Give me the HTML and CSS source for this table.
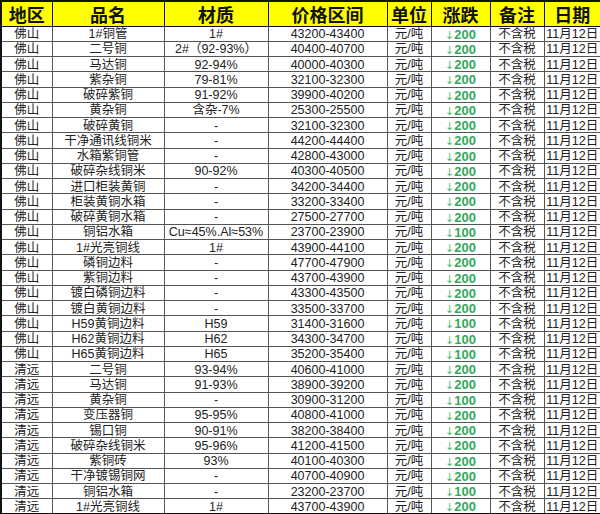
FILE: index.html
```html
<!DOCTYPE html>
<html lang="zh">
<head>
<meta charset="utf-8">
<link rel="stylesheet" href="styles.css">
</head>
<body>
<table class="price">
<colgroup>
<col class="c1"><col class="c2"><col class="c3"><col class="c4"><col class="c5"><col class="c6"><col class="c7"><col class="c8">
</colgroup>
<thead>
<tr><th>地区</th><th>品名</th><th>材质</th><th>价格区间</th><th>单位</th><th>涨跌</th><th>备注</th><th>日期</th></tr>
</thead>
<tbody>
<tr><td>佛山</td><td>1#铜管</td><td>1#</td><td>43200-43400</td><td>元/吨</td><td class="chg"><span class="ar">↓</span>200</td><td>不含税</td><td>11月12日</td></tr>
<tr><td>佛山</td><td>二号铜</td><td>2#（92-93%）</td><td>40400-40700</td><td>元/吨</td><td class="chg"><span class="ar">↓</span>200</td><td>不含税</td><td>11月12日</td></tr>
<tr><td>佛山</td><td>马达铜</td><td>92-94%</td><td>40000-40300</td><td>元/吨</td><td class="chg"><span class="ar">↓</span>200</td><td>不含税</td><td>11月12日</td></tr>
<tr><td>佛山</td><td>紫杂铜</td><td>79-81%</td><td>32100-32300</td><td>元/吨</td><td class="chg"><span class="ar">↓</span>200</td><td>不含税</td><td>11月12日</td></tr>
<tr><td>佛山</td><td>破碎紫铜</td><td>91-92%</td><td>39900-40200</td><td>元/吨</td><td class="chg"><span class="ar">↓</span>200</td><td>不含税</td><td>11月12日</td></tr>
<tr><td>佛山</td><td>黄杂铜</td><td>含杂-7%</td><td>25300-25500</td><td>元/吨</td><td class="chg"><span class="ar">↓</span>200</td><td>不含税</td><td>11月12日</td></tr>
<tr><td>佛山</td><td>破碎黄铜</td><td>-</td><td>32100-32300</td><td>元/吨</td><td class="chg"><span class="ar">↓</span>200</td><td>不含税</td><td>11月12日</td></tr>
<tr><td>佛山</td><td>干净通讯线铜米</td><td>-</td><td>44200-44400</td><td>元/吨</td><td class="chg"><span class="ar">↓</span>200</td><td>不含税</td><td>11月12日</td></tr>
<tr><td>佛山</td><td>水箱紫铜管</td><td>-</td><td>42800-43000</td><td>元/吨</td><td class="chg"><span class="ar">↓</span>200</td><td>不含税</td><td>11月12日</td></tr>
<tr><td>佛山</td><td>破碎杂线铜米</td><td>90-92%</td><td>40300-40500</td><td>元/吨</td><td class="chg"><span class="ar">↓</span>200</td><td>不含税</td><td>11月12日</td></tr>
<tr><td>佛山</td><td>进口柜装黄铜</td><td>-</td><td>34200-34400</td><td>元/吨</td><td class="chg"><span class="ar">↓</span>200</td><td>不含税</td><td>11月12日</td></tr>
<tr><td>佛山</td><td>柜装黄铜水箱</td><td>-</td><td>33200-33400</td><td>元/吨</td><td class="chg"><span class="ar">↓</span>200</td><td>不含税</td><td>11月12日</td></tr>
<tr><td>佛山</td><td>破碎黄铜水箱</td><td>-</td><td>27500-27700</td><td>元/吨</td><td class="chg"><span class="ar">↓</span>200</td><td>不含税</td><td>11月12日</td></tr>
<tr><td>佛山</td><td>铜铝水箱</td><td>Cu≈45%.Al≈53%</td><td>23700-23900</td><td>元/吨</td><td class="chg"><span class="ar">↓</span>100</td><td>不含税</td><td>11月12日</td></tr>
<tr><td>佛山</td><td>1#光亮铜线</td><td>1#</td><td>43900-44100</td><td>元/吨</td><td class="chg"><span class="ar">↓</span>200</td><td>不含税</td><td>11月12日</td></tr>
<tr><td>佛山</td><td>磷铜边料</td><td>-</td><td>47700-47900</td><td>元/吨</td><td class="chg"><span class="ar">↓</span>200</td><td>不含税</td><td>11月12日</td></tr>
<tr><td>佛山</td><td>紫铜边料</td><td>-</td><td>43700-43900</td><td>元/吨</td><td class="chg"><span class="ar">↓</span>200</td><td>不含税</td><td>11月12日</td></tr>
<tr><td>佛山</td><td>镀白磷铜边料</td><td>-</td><td>43300-43500</td><td>元/吨</td><td class="chg"><span class="ar">↓</span>200</td><td>不含税</td><td>11月12日</td></tr>
<tr><td>佛山</td><td>镀白黄铜边料</td><td>-</td><td>33500-33700</td><td>元/吨</td><td class="chg"><span class="ar">↓</span>200</td><td>不含税</td><td>11月12日</td></tr>
<tr><td>佛山</td><td>H59黄铜边料</td><td>H59</td><td>31400-31600</td><td>元/吨</td><td class="chg"><span class="ar">↓</span>100</td><td>不含税</td><td>11月12日</td></tr>
<tr><td>佛山</td><td>H62黄铜边料</td><td>H62</td><td>34300-34700</td><td>元/吨</td><td class="chg"><span class="ar">↓</span>100</td><td>不含税</td><td>11月12日</td></tr>
<tr><td>佛山</td><td>H65黄铜边料</td><td>H65</td><td>35200-35400</td><td>元/吨</td><td class="chg"><span class="ar">↓</span>100</td><td>不含税</td><td>11月12日</td></tr>
<tr><td>清远</td><td>二号铜</td><td>93-94%</td><td>40600-41000</td><td>元/吨</td><td class="chg"><span class="ar">↓</span>200</td><td>不含税</td><td>11月12日</td></tr>
<tr><td>清远</td><td>马达铜</td><td>91-93%</td><td>38900-39200</td><td>元/吨</td><td class="chg"><span class="ar">↓</span>200</td><td>不含税</td><td>11月12日</td></tr>
<tr><td>清远</td><td>黄杂铜</td><td>-</td><td>30900-31200</td><td>元/吨</td><td class="chg"><span class="ar">↓</span>100</td><td>不含税</td><td>11月12日</td></tr>
<tr><td>清远</td><td>变压器铜</td><td>95-95%</td><td>40800-41000</td><td>元/吨</td><td class="chg"><span class="ar">↓</span>200</td><td>不含税</td><td>11月12日</td></tr>
<tr><td>清远</td><td>锡口铜</td><td>90-91%</td><td>38200-38400</td><td>元/吨</td><td class="chg"><span class="ar">↓</span>200</td><td>不含税</td><td>11月12日</td></tr>
<tr><td>清远</td><td>破碎杂线铜米</td><td>95-96%</td><td>41200-41500</td><td>元/吨</td><td class="chg"><span class="ar">↓</span>200</td><td>不含税</td><td>11月12日</td></tr>
<tr><td>清远</td><td>紫铜砖</td><td>93%</td><td>40100-40300</td><td>元/吨</td><td class="chg"><span class="ar">↓</span>200</td><td>不含税</td><td>11月12日</td></tr>
<tr><td>清远</td><td>干净镀锡铜网</td><td>-</td><td>40700-40900</td><td>元/吨</td><td class="chg"><span class="ar">↓</span>200</td><td>不含税</td><td>11月12日</td></tr>
<tr><td>清远</td><td>铜铝水箱</td><td>-</td><td>23200-23700</td><td>元/吨</td><td class="chg"><span class="ar">↓</span>100</td><td>不含税</td><td>11月12日</td></tr>
<tr><td>清远</td><td>1#光亮铜线</td><td>1#</td><td>43700-43900</td><td>元/吨</td><td class="chg"><span class="ar">↓</span>200</td><td>不含税</td><td>11月12日</td></tr>
</tbody>
</table>
</body>
</html>
```

FILE: styles.css
```css
html, body {
  margin: 0;
  padding: 0;
  background: #ffffff;
  overflow: hidden;
}

body {
  width: 600px;
  height: 514px;
}

.price {
  width: 600px;
  table-layout: fixed;
  border-collapse: collapse;
  border: 2px solid #111;
  font-family: "Liberation Sans", "Noto Sans CJK SC", sans-serif;
  color: #222;
}

.c1 { width: 51px; }
.c2 { width: 112px; }
.c3 { width: 104px; }
.c4 { width: 119px; }
.c5 { width: 44px; }
.c6 { width: 59px; }
.c7 { width: 54px; }
.c8 { width: 57px; }

.price thead tr {
  height: 25px;
}

.price th {
  padding: 0;
  background: #ffff00;
  border: 1px solid #111;
  font-family: "Noto Sans CJK SC", sans-serif;
  font-size: 18px;
  font-weight: 700;
  line-height: 18px;
  color: #111;
  text-align: center;
  white-space: nowrap;
  overflow: hidden;
}

.price tbody tr {
  height: 15.25px;
}

.price td {
  padding: 2px 0 0;
  border: 1px solid #555;
  font-size: 12.5px;
  line-height: 11px;
  text-align: center;
  vertical-align: middle;
  white-space: nowrap;
  overflow: hidden;
}

.price td.chg {
  color: #2fa95a;
  font-weight: 700;
  font-size: 13px;
}

.price td.chg .ar {
  font-family: "DejaVu Sans", sans-serif;
  font-weight: 400;
  font-size: 11px;
  color: #5cba7c;
}
```
